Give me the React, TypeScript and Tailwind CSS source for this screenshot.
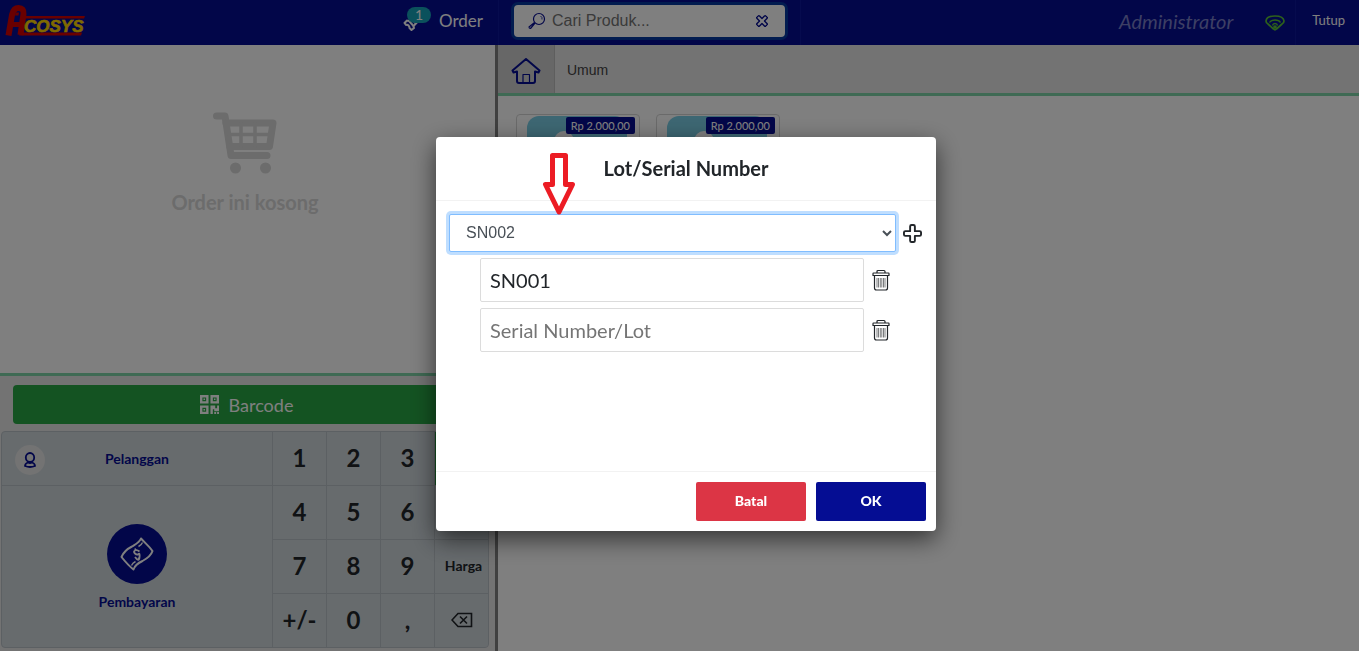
import { useState } from 'react';

function Logo() {
  return (
    <svg className="h-10 w-[88px]" viewBox="0 0 88 40" role="img" aria-label="Acosys">
      <path d="M24 15h61l-1 2.500H24zM21 31.500h61l-1 3H19z" fill="#d40000" />
      <path d="M8.500 34.500L12 14Q13.500 7 18.500 7Q24 7 23.500 13L20.500 34" fill="none" stroke="#d40000" strokeWidth="6" />
      <path d="M13 21h9v5h-9z" fill="#d40000" />
      <path d="M15.500 11.500h3.500l-.5 3h-3.500z" fill="#d40000" />
      <text x="24" y="31" fill="#ffd500" stroke="#ffd500" strokeWidth=".6" fontFamily="Liberation Sans, Arial, sans-serif" fontSize="17" fontWeight="700" fontStyle="italic">
        COSYS
      </text>
    </svg>
  );
}

function TicketIcon() {
  return (
    <svg className="h-5 w-5" viewBox="0 0 20 20" fill="none" stroke="currentColor" strokeWidth="2" strokeLinejoin="round" aria-hidden="true">
      <path d="M1.500 12l2.500-2.500q1.500 1 3-.5L14 3l4 4-6.500 7q-1.500 1.500-.5 3L8.500 19l-2-2q0-1.500-1-2.500T3 14z" />
      <path d="M6.500 10.500l4 4.500M9 8l4 4.500" />
    </svg>
  );
}

function SearchIcon() {
  return (
    <svg className="h-[18px] w-[18px]" viewBox="0 0 18 18" fill="none" stroke="#050d93" strokeWidth="1.200" aria-hidden="true">
      <circle cx="11" cy="7" r="5.500" />
      <path d="M7 11l-4.500 5.500q-1.500 0-1.500-1.500l5.500-4.500" strokeLinejoin="round" />
      <path d="M12.500 4q2 1 1.500 3.500" strokeWidth=".8" />
    </svg>
  );
}

// Outline cross, shared by the "clear" and "add" buttons
function CrossIcon({ className }: { className: string }) {
  return (
    <svg className={className} viewBox="0 0 20 20" fill="none" stroke="currentColor" strokeWidth="2" strokeLinejoin="round" aria-hidden="true">
      <path d="M9 1h2q1.500 0 1.500 1.500v5h5Q19 7.500 19 9v2q0 1.500-1.500 1.500h-5v5Q12.500 19 11 19H9q-1.500 0-1.500-1.500v-5h-5Q1 12.500 1 11V9q0-1.500 1.500-1.500h5v-5Q7.500 1 9 1z" />
    </svg>
  );
}

function HomeIcon() {
  return (
    <svg className="h-[26px] w-[30px]" viewBox="0 0 30 26" fill="none" stroke="#050d93" strokeWidth="2" strokeLinejoin="round" aria-hidden="true">
      <path d="M15 1L1.500 12.500l1 2 3.500-1V23q0 2 2 2h14q2 0 2-2v-9.500l3.500 1 1-2z" />
      <path d="M12 25v-8.500h6.500V25" strokeWidth="1.200" />
    </svg>
  );
}

function SignalIcon() {
  return (
    <svg className="h-4 w-5" viewBox="0 0 20 16" fill="none" stroke="#5bc236" strokeWidth="1.700" strokeLinejoin="round" aria-hidden="true">
      <path d="M1 6Q1.500 1 10 1t9 5q0 2-2 3l-5.500 5q-1.500 1.500-3 0L3 9Q1 8 1 6z" />
      <path d="M4.500 7.500Q6 5 10 5t5.500 2.500M7.500 10.500Q8 8.500 10 8.500t2.500 2" strokeWidth="1.400" />
      <circle cx="10" cy="12" r="1" />
    </svg>
  );
}

function CartIcon() {
  return (
    <svg className="h-[62px] w-[66px]" viewBox="0 0 66 62" fill="none" stroke="currentColor" strokeLinecap="round" strokeLinejoin="round" aria-hidden="true">
      <path d="M4.500 4h8.500l6 39.500h36" strokeWidth="7" />
      <path d="M14 11h47l-3.500 23.500H18" strokeWidth="7" />
      <path d="M17 22.500h42M29 11v23M43 11v23" strokeWidth="3.500" />
      <g fill="currentColor" stroke="none">
        <circle cx="23.500" cy="56" r="5.500" />
        <circle cx="53.500" cy="56" r="5.500" />
      </g>
    </svg>
  );
}

function QrIcon() {
  return (
    <svg className="h-[19px] w-[19px]" viewBox="0 0 20 20" fill="currentColor" aria-hidden="true">
      <path fillRule="evenodd" d="M0 0h9v9H0zM2.500 2.500v4h4v-4zM11 0h9v9h-9zM13.500 2.500v4h4v-4zM0 11h9v9H0zM2.500 13.500v4h4v-4z" />
      <path d="M3.700 3.700h1.600v1.600H3.700zM14.700 3.700h1.600v1.600h-1.600zM3.700 14.700h1.600v1.600H3.700zM11 11h5v3h2v-3h2v6h-5v-2h-1.500v5H11zM15 18h2v2h-2zM18 18h2v2h-2z" />
    </svg>
  );
}

function UserIcon() {
  return (
    <svg className="h-4 w-3" viewBox="0 0 12 16" fill="none" stroke="#050d93" strokeWidth="1.800" aria-hidden="true">
      <ellipse cx="6" cy="5.500" rx="4.200" ry="4.500" />
      <path d="M4 10.500Q1 11.500 1 14q5 2 10 0 0-2.500-3-3.500-2 1-4 0z" />
    </svg>
  );
}

function CashIcon() {
  return (
    <svg className="h-[34px] w-[34px]" viewBox="0 0 34 34" fill="none" stroke="#fff" strokeWidth="2" strokeLinejoin="round" aria-hidden="true">
      <path d="M1.500 20C4 14 8 11.500 12 9.500C16 7 19.500 5.500 21 1.500C25 6 29 9 32.500 14C31 19 27 21.500 22.500 24C18 26 15 28 13.500 32.500C9 29 5.500 25 1.500 20z" />
      <path d="M18.500 9.500q3-1.500 4-4M15.500 24.500q-3 1.500-4 4" strokeWidth="1.400" />
      <path d="M19.500 14.500q-2.500-2-4.500-1t0 3 3.500.5 1 3.500-4.500-.5M15 11.500l.8 2M18.500 20.500l.8 2" strokeWidth="1.800" />
    </svg>
  );
}

function BackspaceIcon() {
  return (
    <svg className="h-4 w-[22px]" viewBox="0 0 22 16" fill="none" stroke="#212529" strokeWidth="1.600" aria-hidden="true">
      <path d="M7 1.500h13.500v13H7L1 8zM9 4.500l7 7M16 4.500l-7 7" />
    </svg>
  );
}

function TrashIcon() {
  return (
    <svg className="h-[22px] w-[18px]" viewBox="0 0 18 22" fill="none" stroke="#212529" strokeWidth="1.200" strokeLinejoin="round" aria-hidden="true">
      <path d="M5 4V2.500q0-1 1-1h6q1 0 1 1V4M1.500 4h15q.5 0 .5.800V6.500H1V4.800Q1 4 1.500 4zM2.500 6.500h13V19q0 2-2 2h-9q-2 0-2-2z" />
      <path d="M5 9v9.500M6.500 9v9.500M8.300 9v9.500M9.800 9v9.500M11.500 9v9.500M13 9v9.500" strokeWidth=".6" />
    </svg>
  );
}

function PointerArrow() {
  return (
    <svg className="pointer-events-none absolute left-[106px] top-[15px] h-[64px] w-[34px]" viewBox="0 0 34 64" aria-hidden="true">
      <path d="M10.500 3.500h13v29h7L17 60 3.500 32.500h7z" fill="#fff" stroke="#ec1c24" strokeWidth="5" strokeLinejoin="round" />
    </svg>
  );
}

const KEYS = ['1', '2', '3', 'Qty', '4', '5', '6', 'Disc', '7', '8', '9', 'Harga', '+/-', '0', ',', 'Backspace'];

function keyContent(key: string) {
  if (key === 'Backspace') return <BackspaceIcon />;
  if (key === 'Qty' || key === 'Disc') return null;
  return key;
}

function TopBar() {
  return (
    <header className="flex h-[45px] shrink-0 bg-[#050d93] text-white">
      <div className="flex w-[498px] shrink-0 items-center justify-between pb-1 pr-[15px]">
        <Logo />
        <button className="flex items-center gap-4 text-[17px]">
          <span className="relative">
            <TicketIcon />
            <span className="absolute left-1 -top-1 flex h-4 w-6 items-center justify-center rounded-full bg-[#17a2b8] text-sm">1</span>
          </span>
          Order
        </button>
      </div>
      <div className="flex w-[303px] shrink-0 items-center border-x border-[#0d169c] px-[15px] pb-[3px]">
        <label className="flex h-8 w-full items-center gap-1 rounded bg-white pl-[14px] pr-4 text-[#050d93] ring-3 ring-[#0538a0]">
          <SearchIcon />
          <input
            aria-label="Cari Produk"
            placeholder="Cari Produk..."
            className="min-w-0 flex-1 bg-transparent pl-0.5 font-['Liberation_Sans',Arial,sans-serif] text-base outline-none placeholder:text-[#757575]"
          />
          <button aria-label="Clear search">
            <CrossIcon className="h-[14px] w-[14px] rotate-45" />
          </button>
        </label>
      </div>
      <div className="flex flex-1 items-center justify-end">
        <span className="mr-8 pb-1 text-xl italic text-[#7a7fc8]">Administrator</span>
        <SignalIcon />
        <button className="ml-[10px] h-full border-l border-[#0d169c] pl-4 pr-[14px] pb-[3px] text-[13px]">Tutup</button>
      </div>
    </header>
  );
}

function OrderPane() {
  return (
    <section className="flex w-[498px] shrink-0 flex-col border-r-3 border-[#808080] bg-white">
      <div className="flex flex-1 flex-col items-center gap-[14px] pt-[67px] pr-[5px] text-[#d8d8d8]">
        <CartIcon />
        <p className="text-xl font-bold leading-7">Order ini kosong</p>
      </div>
      <div className="border-t-3 border-[#7fd4a8] bg-[#e6e6e6] pb-[3px] pt-[9px]">
        <div className="pl-[13px] pr-[15px]">
          <button className="flex h-[39px] w-full items-center justify-center gap-[10px] rounded-sm bg-[#28a745] text-lg text-white">
            <QrIcon />
            Barcode
          </button>
        </div>
        <div className="ml-px mr-[6px] mt-[7px] flex overflow-hidden rounded border border-[#b9c0c6] bg-[#ced6db]">
          <div className="flex flex-1 flex-col text-sm font-bold text-[#050d93]">
            <button className="relative h-[54px] border-b border-[#b9c0c6]">
              <span className="absolute left-[13px] top-[13px] flex h-[30px] w-[30px] items-center justify-center rounded-full bg-[#e6e6e6]">
                <UserIcon />
              </span>
              Pelanggan
            </button>
            <button className="flex flex-1 flex-col items-center justify-center gap-2 pt-0.5">
              <span className="flex h-[60px] w-[60px] items-center justify-center rounded-full bg-[#050d93]">
                <CashIcon />
              </span>
              Pembayaran
            </button>
          </div>
          <div className="grid w-[216px] grid-cols-4 gap-px border-l border-[#b9c0c6] bg-[#b9c0c6] text-[#212529]">
            {KEYS.map((key) => (
              <button
                key={key}
                aria-label={key}
                className={`flex h-[53px] items-center justify-center pb-0.5 ${key === 'Harga' ? 'pl-1 text-sm font-bold' : 'text-2xl font-bold'} ${
                  key === 'Qty' ? 'bg-[#28a745]' : 'bg-[#ced6db]'
                }`}
              >
                {keyContent(key)}
              </button>
            ))}
          </div>
        </div>
      </div>
    </section>
  );
}

function ProductCard() {
  return (
    <article className="relative h-[124px] w-[124px] overflow-hidden rounded-sm border border-[#d5d5d5] bg-white">
      <svg className="ml-[10px] mt-px h-[100px] w-[100px]" viewBox="0 0 100 100" aria-hidden="true">
        <rect width="100" height="100" rx="12" fill="#7bcfe6" />
        <circle cx="37" cy="25" r="10" fill="#fff" />
      </svg>
      <span className="absolute right-1 top-0.5 rounded-xs bg-[#050d93] px-[5px] text-[11px] font-medium leading-[17px] text-white">Rp 2.000,00</span>
    </article>
  );
}

function ProductPane() {
  return (
    <section className="flex min-w-0 flex-1 flex-col bg-white">
      <nav className="flex h-[51px] shrink-0 items-stretch border-b-3 border-[#7fd4a8] bg-[#e6e6e6]">
        <button aria-label="Home" className="flex w-[57px] items-center justify-center border-r border-[#bdbdbd] bg-[#cfcfcf] pt-1">
          <HomeIcon />
        </button>
        <button className="px-3 pt-0.5 font-['Liberation_Sans',Arial,sans-serif] text-sm text-[#444]">Umum</button>
      </nav>
      <div className="flex flex-wrap gap-4 px-[18px] pt-[18px]">
        <ProductCard />
        <ProductCard />
      </div>
    </section>
  );
}

function LotDialog() {
  const [lot, setLot] = useState('SN002');
  const [serials, setSerials] = useState(['SN001', '']);

  return (
    <div role="dialog" aria-labelledby="lot-title" className="relative w-[500px] rounded-sm bg-white text-[#212529] shadow-[0_8px_24px_rgba(0,0,0,0.6)]">
      <h2 id="lot-title" className="border-b border-[#f2f2f2] py-[18px] text-center text-xl font-bold leading-[27px]">
        Lot/Serial Number
      </h2>
      <div className="h-[270px] pl-[13px] pr-3 pt-[13px]">
        <div className="flex items-center gap-1">
          <select
            aria-label="Lot"
            value={lot}
            onChange={(e) => setLot(e.target.value)}
            className="h-[38px] w-[447px] rounded-xs border border-[#80bdff] bg-white px-3 font-['Liberation_Sans',Arial,sans-serif] text-base text-[#495057] outline-none ring-3 ring-[#bfdeff]"
          >
            <option>SN002</option>
          </select>
          <button aria-label="Add lot" className="flex w-6 justify-center pt-0.5" onClick={() => setSerials([...serials, lot])}>
            <CrossIcon className="h-[19px] w-[19px]" />
          </button>
        </div>
        <div className="mt-1.5 flex flex-col gap-1.5 pl-[31px]">
          {serials.map((serial, i) => (
            <div key={i} className="flex items-center gap-2">
              <input
                aria-label={`Serial number ${i + 1}`}
                value={serial}
                placeholder="Serial Number/Lot"
                onChange={(e) => setSerials(serials.map((s, j) => (j === i ? e.target.value : s)))}
                className="h-11 w-96 rounded-xs border border-[#dcdcdc] px-[9px] text-xl outline-none placeholder:text-[#757575]"
              />
              <button aria-label="Delete" onClick={() => setSerials(serials.filter((_, j) => j !== i))}>
                <TrashIcon />
              </button>
            </div>
          ))}
        </div>
      </div>
      <footer className="flex justify-end gap-[10px] border-t border-[#f2f2f2] p-[10px] text-sm font-black text-white">
        <button className="h-[39px] w-[110px] rounded-xs bg-[#dc3545]">Batal</button>
        <button className="h-[39px] w-[110px] rounded-xs bg-[#050d93]">OK</button>
      </footer>
      <PointerArrow />
    </div>
  );
}

export default function App() {
  return (
    <div className="flex h-screen flex-col overflow-hidden font-[Lato,sans-serif]">
      <TopBar />
      <main className="flex min-h-0 flex-1">
        <OrderPane />
        <ProductPane />
      </main>
      <div className="fixed inset-0 flex items-center justify-center bg-black/50 pl-[13px] pt-4">
        <LotDialog />
      </div>
    </div>
  );
}
